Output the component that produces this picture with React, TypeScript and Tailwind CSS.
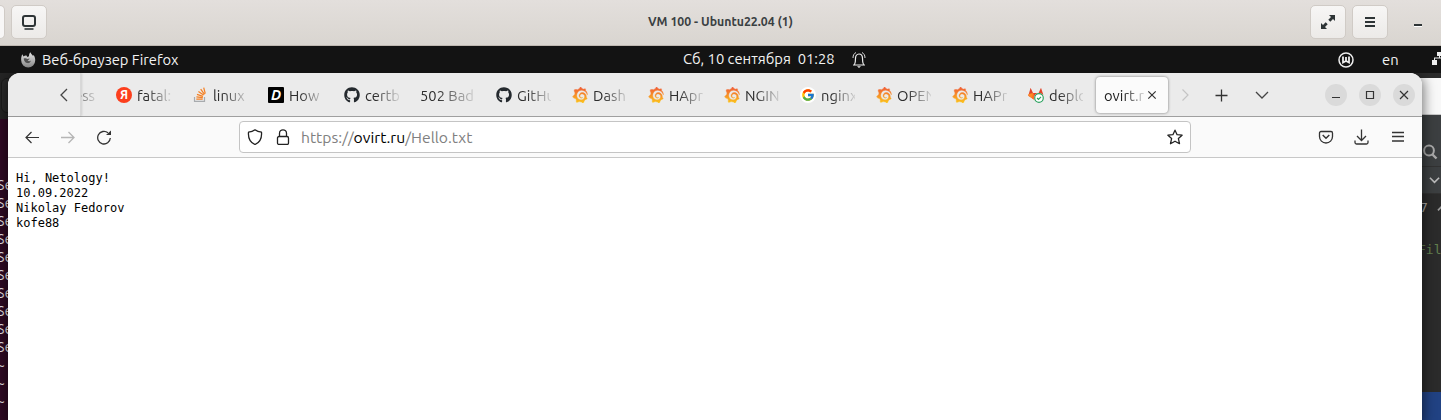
import React from "react";
import { FaGithub } from "react-icons/fa";
import { SiGrafana } from "react-icons/si";
import { FcGoogle } from "react-icons/fc";

type Kind = "yandex" | "stack" | "devto" | "github" | "grafana" | "google" | "gitlab" | "none";

const tabs: { icon: Kind; label: string }[] = [
  { icon: "yandex", label: "fatal:" },
  { icon: "stack", label: "linux" },
  { icon: "devto", label: "How" },
  { icon: "github", label: "certb" },
  { icon: "none", label: "502 Bad" },
  { icon: "github", label: "GitHu" },
  { icon: "grafana", label: "Dash" },
  { icon: "grafana", label: "HApr" },
  { icon: "grafana", label: "NGIN" },
  { icon: "google", label: "nginx" },
  { icon: "grafana", label: "OPEN" },
  { icon: "grafana", label: "HAPr" },
  { icon: "gitlab", label: "deplo" },
];

function Favicon({ kind }: { kind: Kind }) {
  switch (kind) {
    case "yandex":
      return (
        <span className="flex size-4 shrink-0 items-center justify-center rounded-full bg-[#fc3f1d] text-[12px] leading-none font-bold text-white">
          Я
        </span>
      );
    case "stack":
      return (
        <svg viewBox="0 0 16 16" className="size-4 shrink-0" fill="none">
          <path d="M2.5 10v4.3h10V10" stroke="#a8abae" strokeWidth="1.2" />
          <path d="M4.3 12.2h6.4M4.4 9.9l6.4.8M5 7.3l6 2.1M6.4 4.5l5.2 3.6M8.7 2.2l3.8 5.1M11.7.7l1.6 6" stroke="#f48024" strokeWidth="1.25" />
        </svg>
      );
    case "devto":
      return (
        <span className="flex size-4 shrink-0 items-center justify-center rounded-[1px] bg-black text-[14px] leading-none font-bold text-white italic">
          D
        </span>
      );
    case "github":
      return <FaGithub className="size-4 shrink-0 text-[#24292e]" />;
    case "grafana":
      return <SiGrafana className="size-4 shrink-0 fill-[url(#sunrise)] stroke-[url(#sunrise)] stroke-[0.6px]" />;
    case "google":
      return (
        <span className="flex size-4 shrink-0 items-center justify-center rounded-full bg-white">
          <FcGoogle className="size-[14px]" />
        </span>
      );
    case "gitlab":
      return (
        <svg viewBox="0 0 16 16" className="size-4 shrink-0">
          <path d="M2.6.8 5 6h5.6L13 .8l2.3 6.9-7.5 6.1L.3 8.8Z" fill="#e24329" />
          <path d="M.5 7 5 6l2.8 7.8L.3 8.8Z" fill="#fc8a26" />
          <path d="m5 6 2.8 7.8L4 11Z" fill="#fc6d26" />
          <circle cx="11" cy="11" r="5" fill="#fff" />
          <circle cx="11" cy="11" r="4.3" fill="#fff" stroke="#2da160" strokeWidth="1.2" />
          <path d="m9.1 11 1.4 1.4 2.5-2.5" fill="none" stroke="#2da160" strokeWidth="1.3" />
        </svg>
      );
    default:
      return null;
  }
}

const uiText = "font-['Ubuntu','Noto_Sans',sans-serif]";

function TitleButton({ children }: { children: React.ReactNode }) {
  return (
    <div className="flex h-[34px] w-[36px] shrink-0 items-center justify-center rounded-[5px] border border-[#d0cbc6] bg-linear-to-b from-[#f7f6f5] to-[#eceae8]">
      {children}
    </div>
  );
}

function ViewerBar() {
  return (
    <header className="flex h-[46px] shrink-0 items-center border-b border-[#bfb8b1] bg-linear-to-b from-[#e3dfdc] to-[#d9d5d0] pb-px">
      <div className="h-[34px] w-[5px] shrink-0 rounded-r-[5px] border border-l-0 border-[#d0cbc6] bg-[#f8f7f7]" />
      <div className="ml-[6px]">
        <TitleButton>
          <svg viewBox="0 0 16 16" className="size-4" fill="none" stroke="#2e3436" strokeWidth="2">
            <rect x="2" y="2" width="12" height="10" rx="2" />
            <path d="M3.5 15h9" strokeWidth="1.6" />
          </svg>
        </TitleButton>
      </div>
      <h1 className="w-[1263px] shrink-0 pl-[84px] text-center text-[12.3px] font-bold text-[#3a4042]">
        VM 100 - Ubuntu22.04 (1)
      </h1>
      <div className="flex items-center gap-[6px]">
        <TitleButton>
          <svg viewBox="0 0 16 16" className="size-4" fill="#2e3436">
            <path d="M9 1h6v6l-2-2-2.7 2.7-2-2L11 3ZM7 15H1V9l2 2 2.7-2.7 2 2L5 13Z" />
          </svg>
        </TitleButton>
        <TitleButton>
          <svg viewBox="0 0 16 16" className="size-4" stroke="#2e3436" strokeWidth="2">
            <path d="M3 4h10M3 8h10M3 12h10" />
          </svg>
        </TitleButton>
      </div>
      <div className="mt-[6px] ml-[26px] h-[3px] w-[8px] border-b border-white bg-[#2e3436]" />
    </header>
  );
}

function GnomeBar() {
  return (
    <div className="flex h-[27px] shrink-0 items-center bg-[#131313] text-[14.75px] text-[#f2f2f2]">
      <svg viewBox="0 0 16 16" className="ml-[20px] size-4 shrink-0">
        <defs>
          <linearGradient id="fox" x1="0" y1="0" x2="0" y2="1">
            <stop offset="0" stopColor="#e4e4e4" />
            <stop offset="1" stopColor="#858585" />
          </linearGradient>
        </defs>
        <path d="M2.3 2.3 3.5 4.5C4.5 3.5 5.5 3.3 6.5 3.5l.8 1.5L9 4.2C9 2.5 9.5 1.3 10.3.3c.6 1.6 2 2.3 2.7 3.7l.6-.9c1.2 1.7 1.7 3.6 1.6 5.4A7 7 0 0 1 1.2 8.5C1 6.3 1.4 4 2.3 2.3Z" fill="url(#fox)" />
        <path d="M3.7 6.5c1.5-.6 2.8-.4 3.6.5l2.3-.4c-.2 1.2-1.4 1.3-1.9 2 .9.9 2.3.9 3.3 0-.5 2-2.1 3-4 2.5-2.1-.6-3.1-2.6-3.3-4.6Z" fill="#505050" />
      </svg>
      <span className="mt-px ml-[6px] w-[641px] shrink-0 whitespace-nowrap">Веб-браузер Firefox</span>
      <span className="w-[152px] shrink-0 whitespace-pre">Сб, 10 сентября  01:28</span>
      <svg viewBox="0 0 16 18" className="ml-[16px] h-[18px] w-4 shrink-0" fill="none" stroke="#eee" strokeWidth="1.2">
        <path d="M2 14h12M3.5 13.5c1-1.5 1-3 1-6 0-2.5 1.2-4.5 3.5-4.5s3.5 2 3.5 4.5c0 3 0 4.5 1 6" />
        <path d="M2 7c0-3 1.2-4.5 3-5.5M14 7c0-3-1.2-4.5-3-5.5" strokeWidth=".9" />
        <path d="M6 15.3h4L8 17Z" fill="#eee" stroke="none" />
      </svg>
      <svg viewBox="0 0 16 16" className="ml-[471px] size-4 shrink-0" fill="none" stroke="#eee">
        <circle cx="8" cy="8" r="7" strokeWidth="1.5" />
        <path d="M5 4.5v6L8 9l3 1.5v-6M8 5v4" strokeWidth="1.8" />
      </svg>
      <span className="mt-px ml-[28px] w-[50px] shrink-0">en</span>
      <svg viewBox="0 0 16 16" className="-mt-[2px] size-4 shrink-0" fill="#eee">
        <path d="M5 1h5v4H5ZM0 9h5v5H0ZM10 9h5v5h-5ZM2 6.5h11V9h-1V7.5H3V9H2ZM7 5h1v2H7Z" />
      </svg>
    </div>
  );
}

function Tab({ icon, label }: { icon: Kind; label: string }) {
  const width = icon === "none" ? "w-[55px]" : "w-[34px]";
  return (
    <div className="flex w-[76px] shrink-0 items-center gap-[5px] pl-[8px]">
      <Favicon kind={icon} />
      <span className={`${width} mt-[3px] overflow-hidden mask-r-from-30% mask-r-to-110% whitespace-nowrap`}>{label}</span>
    </div>
  );
}

function WindowButton({ children }: { children: React.ReactNode }) {
  return (
    <div className="flex size-[22px] items-center justify-center rounded-full bg-[#dadada]">
      <svg viewBox="0 0 16 16" className="size-4" fill="none" stroke="#333" strokeWidth="1.2">
        {children}
      </svg>
    </div>
  );
}

function TabStrip() {
  return (
    <div className="flex h-[44px] shrink-0 items-center border-b border-[#9f9f9f] bg-[#ebebeb] text-[14.75px] text-[#2c2c2c]">
      <div className="flex h-full w-[73px] shrink-0 items-center justify-end border-r border-[#d8d8d8] pr-[8px] shadow-[1px_0_2px_rgba(0,0,0,0.12)]">
        <svg viewBox="0 0 16 16" className="size-4" fill="none" stroke="#444" strokeWidth="1.3">
          <path d="M11 2 5 8l6 6" />
        </svg>
      </div>
      <div className="mt-[3px] flex w-[27px] shrink-0 overflow-hidden">
        <span className="-ml-[7px] w-[24px] overflow-hidden mask-r-from-0% mask-r-to-110% opacity-80">ess</span>
      </div>
      {tabs.map((t, i) => (
        <Tab key={i} icon={t.icon} label={t.label} />
      ))}
      <div className="flex h-[36px] w-[72px] shrink-0 items-center rounded-[4px] bg-[#fbfbfb] pl-[8px] shadow-[0_0_3px_rgba(0,0,0,0.5)]">
        <span className="mt-[3px] w-[40px] overflow-hidden mask-r-from-50% mask-r-to-110% whitespace-nowrap text-[#222]">ovirt.ru</span>
        <svg viewBox="0 0 16 16" className="size-4 shrink-0" fill="none" stroke="#333" strokeWidth="1.2">
          <path d="m4.3 4.3 7.4 7.4M11.7 4.3l-7.4 7.4" />
        </svg>
      </div>
      <svg viewBox="0 0 16 16" className="ml-[9px] size-4 shrink-0" fill="none" stroke="#c4c4c4" strokeWidth="1.2">
        <path d="m5.5 2.5 5.5 5.5-5.5 5.5" />
      </svg>
      <svg viewBox="0 0 16 16" className="ml-[20px] size-4 shrink-0" stroke="#333" strokeWidth="1.3">
        <path d="M2.5 8.5h12M8.5 2.5v12" />
      </svg>
      <svg viewBox="0 0 16 16" className="ml-[25px] size-4 shrink-0" fill="none" stroke="#444" strokeWidth="1.3">
        <path d="m2 5 6 6 6-6" />
      </svg>
      <div className="ml-[55px] flex shrink-0 gap-[12px]">
        <WindowButton><path d="M4 10.5h8" /></WindowButton>
        <WindowButton><path d="M4.5 4.5h7v7h-7Z" /></WindowButton>
        <WindowButton><path d="m4 4 8 8m0-8-8 8" /></WindowButton>
      </div>
    </div>
  );
}

function Toolbar() {
  return (
    <div className="flex h-[41px] shrink-0 items-center border-b border-[#c8c8c8] bg-[#fafafa]">
      <svg viewBox="0 0 16 16" className="ml-[16px] size-4 shrink-0" fill="none" stroke="#333" strokeWidth="1.2">
        <path d="M15 8.5H2M7.5 3 2 8.5 7.5 14" />
      </svg>
      <svg viewBox="0 0 16 16" className="ml-[20px] size-4 shrink-0" fill="none" stroke="#b5b5b5" strokeWidth="1.3">
        <path d="M1 8.5h13M8.5 3 14 8.5 8.5 14" />
      </svg>
      <svg viewBox="0 0 16 16" className="ml-[20px] size-4 shrink-0" fill="none" stroke="#333" strokeWidth="1.3">
        <path d="M14.3 9A6.3 6.3 0 1 1 12 3.8" />
        <path d="M15 1.5V6H10Z" fill="#333" stroke="none" />
      </svg>
      <div className="ml-[127px] flex h-[32px] w-[952px] shrink-0 items-center rounded-[4px] border border-[#c4c4c4] bg-white">
        <svg viewBox="0 0 16 16" className="ml-[7px] size-4 shrink-0" fill="none" stroke="#222" strokeWidth="1.3">
          <path d="M8 .8c2 1.6 4 2.2 6.5 2.4C15 9 12.5 13.5 8 15.5 3.5 13.5 1 9 1.5 3.2 4 3 6 2.4 8 .8Z" strokeLinejoin="round" />
        </svg>
        <svg viewBox="0 0 16 16" className="ml-[12px] size-4 shrink-0" fill="none" stroke="#222" strokeWidth="1.3">
          <rect x="2.5" y="7.5" width="11" height="8" rx="1.5" />
          <path d="M4.5 7.5V4.3a3.5 3.5 0 0 1 7 0v3.2" />
        </svg>
        <span className="mt-px ml-[10px] grow text-[15.7px] text-[#808080]">
          https://<span className="text-black">ovirt.ru</span>/Hello.txt
        </span>
        <svg viewBox="0 0 16 16" className="mr-[7px] size-4 shrink-0" fill="none" stroke="#222" strokeWidth="1.3" strokeLinejoin="round">
          <path d="m8 1.2 2.1 4.5 5 .5-3.7 3.4 1.1 5.1L8 12.2l-4.500 2.500 1.100-5.100L.9 6.200l5-.5Z" />
        </svg>
      </div>
      <svg viewBox="0 0 16 16" className="ml-[127px] size-4 shrink-0" fill="none" stroke="#333" strokeWidth="1.3">
        <path d="M3 2.5h10a1.5 1.5 0 0 1 1.5 1.5v3.5a6.5 6.5 0 0 1-13 0V4A1.5 1.5 0 0 1 3 2.5Z" />
        <path d="M4.7 6 8 9.3 11.3 6" strokeWidth="1.4" />
      </svg>
      <svg viewBox="0 0 16 16" className="ml-[19px] size-4 shrink-0" fill="none" stroke="#333" strokeWidth="1.3">
        <path d="M8.5.5v10.5M4 7l4.5 4.5L13 7M2 11.5v2A1.5 1.5 0 0 0 3.5 15h10a1.5 1.5 0 0 0 1.5-1.5v-2" />
      </svg>
      <svg viewBox="0 0 16 16" className="ml-[21px] size-4 shrink-0" stroke="#333" strokeWidth="1.3">
        <path d="M2 3.5h12M2 7.5h12M2 12h12" />
      </svg>
    </div>
  );
}

function FirefoxWindow() {
  return (
    <section className="absolute top-0 left-[8px] flex h-[347px] w-[1414px] flex-col overflow-hidden rounded-t-[12px] bg-white shadow-[0_3px_12px_2px_rgba(0,0,0,0.5)]">
      <TabStrip />
      <Toolbar />
      <pre className="px-[8px] pt-[13px] font-['DejaVu_Sans_Mono',monospace] text-[12px] leading-[15px] text-black">
        {"Hi, Netology!\n10.09.2022\nNikolay Fedorov\nkofe88"}
      </pre>
    </section>
  );
}

function Terminal() {
  const lines = ["Se", "Se", "Se", "Se", "Se", "Se", "Se", "Se", "Se", "Se", "~", "~", "~"];
  return (
    <div className="flex w-[40px] shrink-0 flex-col bg-[#300a24]">
      <div className="h-[46px] shrink-0 bg-[#252525] pt-[5px]">
        <div className="ml-px h-[35px] w-[30px] rounded-[6px] border border-[#1b1b1b] bg-[#2b2b2b]" />
      </div>
      <pre className="mt-[57px] -ml-[3px] font-['Ubuntu_Mono','DejaVu_Sans_Mono',monospace] text-[14px] leading-[18px] text-[#f0ecef]">
        {lines.join("\n")}
      </pre>
    </div>
  );
}

function Editor() {
  return (
    <div className="flex w-[41px] shrink-0 flex-col bg-[#2b2b2b] font-['DejaVu_Sans_Mono',monospace] text-[13px]">
      <div className="h-[5px] shrink-0 bg-[#2b2b2b]" />
      <div className="h-[37px] shrink-0 border-b border-[#c8c8c8] bg-[#f8f8f8]" />
      <div className="flex h-[51px] shrink-0 items-end justify-end bg-[#3c3f41] pr-[3px] pb-[6px]">
        <svg viewBox="0 0 16 16" className="size-4" fill="none" stroke="#aaa" strokeWidth="2">
          <circle cx="7" cy="6.5" r="4.9" />
          <path d="m10.5 10.5 4 4" strokeWidth="2.4" />
        </svg>
      </div>
      <div className="flex h-[28px] shrink-0 items-center justify-end border-t border-b border-[#323232] bg-[#3c3f41]">
        <svg viewBox="0 0 12 12" className="mr-px size-[11px]" fill="none" stroke="#bbb" strokeWidth="1.8">
          <path d="m1 3 5 5 5-5" />
        </svg>
      </div>
      <div className="flex h-[28px] shrink-0 items-center pl-[20px] text-[#a9a9a9]">
        7<svg viewBox="0 0 12 12" className="ml-[9px] size-[11px] shrink-0" fill="none" stroke="#999" strokeWidth="1.8">
          <path d="m1 8 5-5 5 5" />
        </svg>
      </div>
      <div className="mt-[18px] overflow-hidden pl-[18px] whitespace-nowrap text-[#62804f]">Fil</div>
      <div className="mt-auto h-[28px] shrink-0 bg-[#214283]" />
    </div>
  );
}

export default function App() {
  return (
    <div className={`flex h-[420px] w-[1441px] flex-col overflow-hidden ${uiText}`}>
      <svg className="absolute size-0">
        <linearGradient id="sunrise" x1="0" y1="1" x2="0" y2="0">
          <stop offset="0" stopColor="#fcc41b" />
          <stop offset="1" stopColor="#f05a36" />
        </linearGradient>
      </svg>
      <ViewerBar />
      <GnomeBar />
      <main className="relative flex grow justify-between overflow-hidden bg-[#2b2b2b]">
        <Terminal />
        <Editor />
        <FirefoxWindow />
      </main>
    </div>
  );
}
